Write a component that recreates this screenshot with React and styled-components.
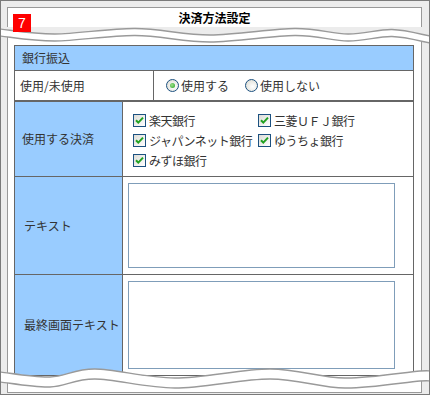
import React from "react";
import styled, { createGlobalStyle } from "styled-components";

const GlobalStyle = createGlobalStyle`
  html, body { margin: 0; padding: 0; background: #fff; }
  body {
    font-family: "Noto Sans CJK JP", "Noto Sans", sans-serif;
    font-size: 12px;
    color: #333;
  }
  * { box-sizing: border-box; }
`;

const Frame = styled.div`
  position: relative;
  width: 430px;
  height: 395px;
  border: 1px solid #7a7a7a;
  background: #ececec;
  padding: 6px 7px 1px 6px;
  display: flex;
  flex-direction: column;
  overflow: hidden;
`;

const TitleBox = styled.div`
  height: 21px;
  border: 1px solid #999;
  background: #fff;
  text-align: center;
  font-weight: bold;
  font-size: 12px;
  line-height: 19px;
  color: #000;
`;

const Panel = styled.div`
  flex: 1;
  margin-top: 8px;
  background: #fff;
  border: 1px solid #999;
  border-top: none;
  padding: 9px 7px 16px 6px;
  display: flex;
  flex-direction: column;
`;

const Section = styled.div`
  border: 1px solid #666;
`;

const Header = styled.div`
  height: 25px;
  background: #99ccff;
  border-bottom: 1px solid #666;
  padding-left: 7px;
  line-height: 24px;
`;

const Row = styled.div`
  display: grid;
  grid-template-columns: ${(p) => p.$label}px 1fr;
  height: ${(p) => p.$h}px;
  & + & {
    border-top: 1px solid #666;
  }
`;

const Label = styled.div`
  background: ${(p) => (p.$blue ? "#99ccff" : "#fff")};
  border-right: 1px solid #666;
  display: flex;
  align-items: center;
  padding-left: ${(p) => p.$pad}px;
  line-height: 14px;
`;

const Value = styled.div`
  display: flex;
  align-items: ${(p) => (p.$top ? "flex-start" : "center")};
  padding: ${(p) => p.$pad || "0"};
`;

const RadioGroup = styled.div`
  display: flex;
  align-items: center;
  gap: 16px;
  padding-left: 12px;
`;

const Choice = styled.label`
  display: flex;
  align-items: center;
  gap: 2px;
  height: 20px;
  white-space: nowrap;
`;

const ChoiceText = styled.span`
  margin-left: 1px;
  letter-spacing: -0.5px;
`;

const RadioDot = styled.span`
  width: 13px;
  height: 13px;
  border-radius: 50%;
  border: 1px solid #1c5180;
  background: radial-gradient(circle at 60% 60%, #ffffff 0%, #e8e8e2 60%, #d0d0c8 100%);
  display: flex;
  align-items: center;
  justify-content: center;
  &::after {
    content: "";
    width: 5px;
    height: 5px;
    border-radius: 50%;
    background: ${(p) => (p.$on ? "radial-gradient(circle at 40% 40%, #9fe08a, #21a121)" : "transparent")};
  }
`;

const CheckGrid = styled.div`
  display: grid;
  grid-template-columns: 125px 125px;
  grid-auto-rows: 20px;
  padding: 8px 0 0 10px;
`;

const Box = styled.span`
  width: 13px;
  height: 13px;
  border: 1px solid #1c5180;
  background: linear-gradient(135deg, #dcdcd7, #ffffff);
  display: flex;
  align-items: center;
  justify-content: center;
  flex-shrink: 0;
`;

const TextBox = styled.textarea`
  display: block;
  width: 267px;
  height: ${(p) => p.$h}px;
  border: 1px solid #7f9db9;
  margin: 0;
  padding: 2px;
  resize: none;
  background: #fff;
  font: inherit;
`;

const Badge = styled.div`
  position: absolute;
  left: 12px;
  top: 13px;
  width: 18px;
  height: 18px;
  background: #ff0000;
  color: #fff;
  font-family: "Liberation Sans", sans-serif;
  font-size: 14px;
  line-height: 18px;
  text-align: center;
  z-index: 2;
`;

const WaveLayer = styled.svg`
  position: absolute;
  left: -1px;
  top: -1px;
  width: 430px;
  height: 395px;
  pointer-events: none;
  z-index: 1;
`;

function segs(pts) {
  let d = "";
  for (let i = 0; i < pts.length - 1; i++) {
    const p0 = pts[i - 1] || pts[i];
    const p1 = pts[i];
    const p2 = pts[i + 1];
    const p3 = pts[i + 2] || p2;
    const c1 = [p1[0] + (p2[0] - p0[0]) / 6, p1[1] + (p2[1] - p0[1]) / 6];
    const c2 = [p2[0] - (p3[0] - p1[0]) / 6, p2[1] - (p3[1] - p1[1]) / 6];
    d += ` C${c1[0].toFixed(2)},${c1[1].toFixed(2)} ${c2[0].toFixed(2)},${c2[1].toFixed(2)} ${p2[0]},${p2[1]}`;
  }
  return d;
}
const line = (pts) => `M${pts[0][0]},${pts[0][1]}` + segs(pts);
const shift = (pts, dy) => pts.map(([x, y]) => [x, y + dy]);

const topUpper = [
  [0, 29], [55, 34], [135, 28.5], [210, 35], [295, 28.5], [348, 34], [392, 29.5], [430, 36],
];
const topLower = shift(topUpper, 7);
const botUpper = [
  [0, 372], [50, 377], [95, 369], [175, 378], [270, 369], [345, 378], [420, 371], [430, 372],
];
const botLower = shift(botUpper, 10);

function band(up, low) {
  const rev = [...low].reverse();
  return line(up) + ` L${rev[0][0]},${rev[0][1]}` + segs(rev) + " Z";
}

function Waves() {
  const topFill = line(topUpper) + " L430,27 L0,27 Z";
  return (
    <WaveLayer viewBox="0 0 430 395">
      <path d={topFill} fill="#ececec" />
      <line x1="0.5" y1="27" x2="0.5" y2="38" stroke="#7a7a7a" />
      <path d={band(topUpper, topLower)} fill="#fff" />
      <path d={line(topUpper)} fill="none" stroke="#9a9a9a" strokeWidth="1.4" />
      <path d={line(topLower)} fill="none" stroke="#9a9a9a" strokeWidth="1.4" />
      <path d={band(botUpper, botLower)} fill="#fff" />
      <path d={line(botUpper)} fill="none" stroke="#9a9a9a" strokeWidth="1.4" />
      <path d={line(botLower)} fill="none" stroke="#9a9a9a" strokeWidth="1.4" />
    </WaveLayer>
  );
}

function Radio({ on, children }) {
  return (
    <Choice>
      <RadioDot $on={on} />
      {children}
    </Choice>
  );
}

function Check({ children }) {
  return (
    <Choice>
      <Box>
        <svg width="9" height="9" viewBox="0 0 9 9">
          <path d="M1 4.2 L3.3 6.6 L8 1.6" fill="none" stroke="#21a121" strokeWidth="2" />
        </svg>
      </Box>
      <ChoiceText>{children}</ChoiceText>
    </Choice>
  );
}

export default function App() {
  return (
    <>
      <GlobalStyle />
      <Frame>
        <TitleBox>決済方法設定</TitleBox>
        <Panel>
          <Section>
            <Header>銀行振込</Header>
            <Row $label={139} $h={29}>
              <Label $pad={5}>使用/未使用</Label>
              <Value>
                <RadioGroup>
                  <Radio on>使用する</Radio>
                  <Radio>使用しない</Radio>
                </RadioGroup>
              </Value>
            </Row>
          </Section>
          <Section>
            <Row $label={108} $h={74}>
              <Label $blue $pad={7}>使用する決済</Label>
              <Value $top>
                <CheckGrid>
                  <Check>楽天銀行</Check>
                  <Check>三菱ＵＦＪ銀行</Check>
                  <Check>ジャパンネット銀行</Check>
                  <Check>ゆうちょ銀行</Check>
                  <Check>みずほ銀行</Check>
                </CheckGrid>
              </Value>
            </Row>
            <Row $label={108} $h={98}>
              <Label $blue $pad={9}>テキスト</Label>
              <Value $top $pad="6px 0 0 5px">
                <TextBox $h={85} />
              </Value>
            </Row>
            <Row $label={108} $h={101}>
              <Label $blue $pad={9}>最終画面テキスト</Label>
              <Value $top $pad="6px 0 0 5px">
                <TextBox $h={88} />
              </Value>
            </Row>
          </Section>
        </Panel>
        <Waves />
        <Badge>7</Badge>
      </Frame>
    </>
  );
}
